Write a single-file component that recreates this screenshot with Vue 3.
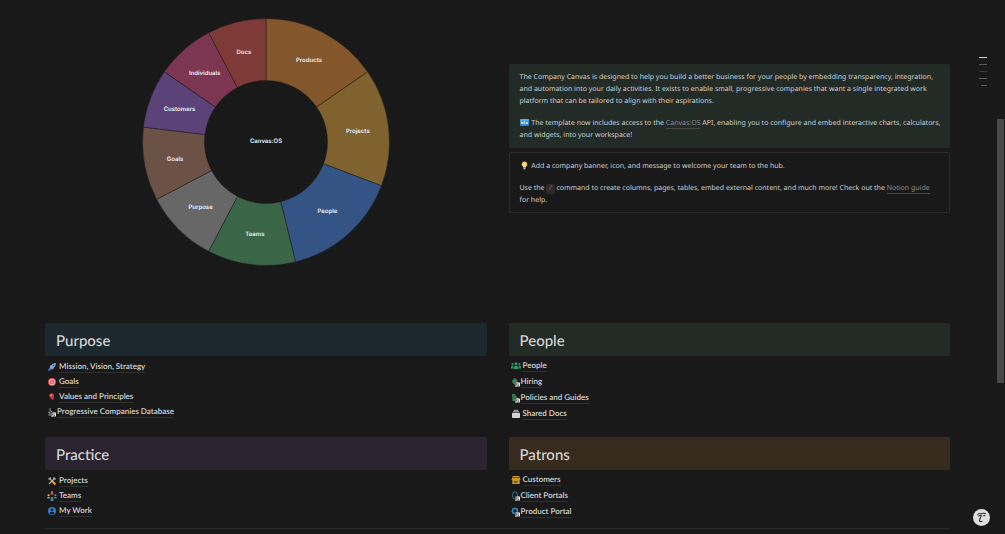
<script setup>
const parts = [
  { name: 'Products', share: 8, color: '#84562b' },
  { name: 'Projects', share: 8, color: '#7f622d' },
  { name: 'People', share: 8, color: '#335485' },
  { name: 'Teams', share: 6, color: '#3a6647' },
  { name: 'Purpose', share: 5, color: '#676767' },
  { name: 'Goals', share: 5, color: '#6c5146' },
  { name: 'Customers', share: 4, color: '#5b4379' },
  { name: 'Individuals', share: 4, color: '#7c3652' },
  { name: 'Docs', share: 4, color: '#7d3a36' },
]
const total = parts.reduce((sum, p) => sum + p.share, 0)
const point = (radius, turn) => {
  const a = turn * Math.PI * 2
  return [(124 + radius * Math.sin(a)).toFixed(2), (124 - radius * Math.cos(a)).toFixed(2)]
}
let start = 0
const slices = parts.map((p) => {
  const from = start / total
  start += p.share
  const to = start / total
  const d = `M${point(123.5, from)} A123.5 123.5 0 0 1 ${point(123.5, to)} L${point(61.5, to)} A61.5 61.5 0 0 0 ${point(61.5, from)} Z`
  const [x, y] = point(92.5, (from + to) / 2)
  return { ...p, d, x, y }
})

const columns = [
  {
    side: 'left',
    sections: [
      {
        title: 'Purpose', tone: 'blue',
        links: [
          { icon: 'rocket', text: 'Mission, Vision, Strategy' },
          { icon: 'target', text: 'Goals' },
          { icon: 'gem', text: 'Values and Principles' },
          { icon: 'chart', text: 'Progressive Companies Database', jump: true },
        ],
      },
      {
        title: 'Practice', tone: 'purple',
        links: [
          { icon: 'tools', text: 'Projects' },
          { icon: 'circle', text: 'Teams' },
          { icon: 'user', text: 'My Work' },
        ],
      },
    ],
  },
  {
    side: 'right',
    sections: [
      {
        title: 'People', tone: 'green',
        links: [
          { icon: 'group', text: 'People' },
          { icon: 'hand', text: 'Hiring', jump: true },
          { icon: 'doc', text: 'Policies and Guides', jump: true },
          { icon: 'archive', text: 'Shared Docs' },
        ],
      },
      {
        title: 'Patrons', tone: 'brown',
        links: [
          { icon: 'shop', text: 'Customers' },
          { icon: 'ring', text: 'Client Portals', jump: true },
          { icon: 'cog', text: 'Product Portal', jump: true },
        ],
      },
    ],
  },
]
</script>

<template>
  <div class="page">
    <main class="content">
      <div class="intro">
        <svg class="wheel" viewBox="0 0 248 248" role="img" aria-label="Canvas:OS">
          <path v-for="s in slices" :key="s.name" :d="s.d" :fill="s.color" stroke="#1c1b1b" stroke-opacity=".5" stroke-width="1" />
          <text v-for="s in slices" :key="s.name + 't'" :x="s.x" :y="s.y" dy="2">{{ s.name }}</text>
          <text x="124" y="125">Canvas:OS</text>
        </svg>
        <div class="notes">
          <section class="note filled">
            <p>The Company Canvas is designed to help you build a better business for your people by embedding transparency, integration, and automation into your daily activities. It exists to enable small, progressive companies that want a single integrated work platform that can be tailored to align with their aspirations.</p>
            <p>
              <svg class="emoji" viewBox="0 0 9 9"><rect y="1" width="9" height="7" rx="1" fill="#2e86cf" /><path d="M0 3V2a1 1 0 0 1 1-1h7a1 1 0 0 1 1 1v1z" fill="#5ba9e2" /><path d="M1.3 5.8V3.7l1.3 2.1V3.7M5 3.7H3.8v2.1H5M3.8 4.7h1M5.8 3.7l.4 2.1.6-1.5.6 1.5.4-2.1" fill="none" stroke="#fff" stroke-width=".6" /></svg>
              The template now includes access to the <a href="#api">Canvas:OS</a> API, enabling you to configure and embed interactive charts, calculators, and widgets, into your workspace!
            </p>
          </section>
          <section class="note outlined">
            <p>
              <svg class="emoji" viewBox="0 0 9 9"><path d="M4.5.5a2.8 2.8 0 0 0-1.6 5.1l.4.9h2.4l.4-.9A2.8 2.8 0 0 0 4.5.5z" fill="#f8cf63" /><path d="M3.7 2.5 4.5 5.5 5.3 2.5" fill="none" stroke="#fff0b4" stroke-width=".5" /><path d="M3.3 6.5h2.4v1.2L5 8.5H4l-.7-.8z" fill="#9bb2bd" /></svg>
              Add a company banner, icon, and message to welcome your team to the hub.
            </p>
            <p>Use the <code>/</code> command to create columns, pages, tables, embed external content, and much more! Check out the <a href="#guide">Notion guide</a> for&nbsp;help.</p>
          </section>
        </div>
      </div>

      <div class="directory">
        <div v-for="c in columns" :key="c.side" :class="['column', c.side]">
          <section v-for="s in c.sections" :key="s.title" class="group">
            <h2 :class="s.tone">{{ s.title }}</h2>
            <ul>
              <li v-for="l in s.links" :key="l.text" :class="{ jump: l.jump }">
                <svg class="icon" viewBox="0 0 10 10" aria-hidden="true">
                  <template v-if="l.icon === 'rocket'">
                    <path d="M2 4.5 4 3l3 3-1.5 2L5 6.5 3.5 5z" fill="#d64b45" />
                    <path d="M2.5 6.5C3 3.5 6 1 9 1c0 3-2.5 5.8-5.5 6.5z" fill="#75aee5" />
                    <path d="M7 1.5Q8 1 9 1q0 1-.5 2z" fill="#e25555" />
                    <circle cx="6.5" cy="3.5" r=".8" fill="#275b92" />
                    <path d="M1 9l.7-2.2L3.3 6l.8.8-.8 1.5z" fill="#3f7dc5" />
                  </template>
                  <template v-else-if="l.icon === 'target'">
                    <circle cx="5" cy="5" r="4" fill="#d8434a" /><circle cx="5" cy="5" r="2.9" fill="#f3cdca" />
                    <circle cx="5" cy="5" r="2" fill="#d8434a" /><circle cx="5" cy="5" r=".8" fill="#fff" />
                    <path d="M5 5l3-3" stroke="#5ca6d8" stroke-width=".8" />
                  </template>
                  <template v-else-if="l.icon === 'gem'">
                    <path d="M3 2 5.5 1.5 7 2.5v4L6 8 4 7 2.5 4.5z" fill="#c92e40" /><path d="M3 2 5.5 1.5 5 4.5 2.5 4z" fill="#ec6972" />
                  </template>
                  <template v-else-if="l.icon === 'chart'">
                    <path d="M3 1v7M1 5l2 1M1 8h4M3 3l2 2" fill="none" stroke="#8b8b8b" stroke-width="1" />
                  </template>
                  <template v-else-if="l.icon === 'tools'">
                    <path d="M2 2l6 6" stroke="#e49532" stroke-width="1.4" /><path d="M8 2 2 8" stroke="#9eb3bd" stroke-width="1.3" />
                    <path d="M1 3l2.5-2 1 1L2.5 4z" fill="#91a7b2" /><path d="M7 1v2h2" fill="none" stroke="#9eb3bd" /><path d="M5.5 5.5 8.5 8.5" stroke="#f2a036" stroke-width="1.8" />
                  </template>
                  <template v-else-if="l.icon === 'circle'">
                    <g fill="#e4645c"><circle cx="5" cy="1" r="1" /><path d="M3.3 3.5a1.7 1.7 0 0 1 3.4 0z" /></g>
                    <g fill="#edbf70"><circle cx="1.5" cy="4.3" r="1" /><path d="M0 7.3a1.7 1.7 0 0 1 3.3 0z" /></g>
                    <g fill="#42b88b"><circle cx="8.5" cy="4.3" r="1" /><path d="M6.7 7.3a1.7 1.7 0 0 1 3.3 0z" /></g>
                    <g fill="#3daee0"><circle cx="5" cy="7" r="1" /><path d="M3.3 9.7a1.7 1.7 0 0 1 3.4 0z" /></g>
                  </template>
                  <template v-else-if="l.icon === 'user'">
                    <circle cx="5" cy="5" r="4" fill="#2f7fd4" /><circle cx="5" cy="3.8" r="1.3" fill="#191919" /><path d="M2.5 7.2a2.9 2.9 0 0 1 5 0 3.6 3.6 0 0 1-5 0z" fill="#191919" />
                  </template>
                  <template v-else-if="l.icon === 'group'">
                    <g fill="#2c9b67"><circle cx="5" cy="2.7" r="1.5" /><circle cx="1.6" cy="3" r="1.1" /><circle cx="8.4" cy="3" r="1.1" /><path d="M2.5 8V6.5a2.5 1.7 0 0 1 5 0V8zM0 7.5V6a1.7 1.4 0 0 1 2.3-1.2Q1.8 5.5 1.8 7.5zM10 7.5V6a1.7 1.4 0 0 0-2.3-1.2q.5.7.5 2.7z" /></g>
                  </template>
                  <template v-else-if="l.icon === 'hand'">
                    <path d="M1 4l1-1.5L4 1l2.5 2v4L4 8 1.5 6z" fill="#3c7a57" />
                  </template>
                  <template v-else-if="l.icon === 'doc'">
                    <path d="M1 1h3l1 2 2 2v3H1.5z" fill="#377f58" /><path d="M2 3h2M2 5h3" stroke="#234f38" stroke-width=".6" />
                  </template>
                  <template v-else-if="l.icon === 'archive'">
                    <path d="M1 4.5q0-.8.8-.8h6.4q.8 0 .8.8v3.700q0 .8-.8.8H1.8Q1 9 1 8.200z" fill="#d3d3d3" /><path d="M2 2.700h6M2.800 1.300h4.400" stroke="#bdbdbd" stroke-width=".9" />
                  </template>
                  <template v-else-if="l.icon === 'shop'">
                    <path d="M1.5 1h7v1h-7zM1.2 2.4h7.6L9.5 5h-9zM1.3 5h7.4v4H1.3z" fill="#cc9326" /><path d="M3 6v1.5h3.5V6" fill="#654813" />
                  </template>
                  <template v-else-if="l.icon === 'ring'">
                    <ellipse cx="4" cy="4.5" rx="2.5" ry="3.8" fill="none" stroke="#33758c" stroke-width="1" />
                  </template>
                  <template v-else>
                    <circle cx="4" cy="4" r="2.5" fill="none" stroke="#3284b8" stroke-width="1.5" /><path d="M4 .5v1M.5 4h1M1.5 1.5l1 1M1.5 6.5l1-1M6.5 1.5l-1 1" stroke="#3284b8" />
                  </template>
                  <g v-if="l.jump"><rect x="4" y="5.5" width="5" height="4.5" fill="#777" /><path d="M5 9.5 8 6.5M5.5 6H8.5V9" fill="none" stroke="#e8e8e8" stroke-width="1" /></g>
                </svg>
                <a href="#page">{{ l.text }}</a>
              </li>
            </ul>
          </section>
        </div>
      </div>
      <hr />
    </main>

    <nav class="outline" aria-label="Outline"><i class="on"></i><i></i><i class="dim"></i><i></i><i class="short"></i></nav>
    <div class="track"><div class="thumb"></div></div>
    <button class="help" aria-label="Assistant">
      <svg viewBox="0 0 17 17"><path d="M4.5 5.5Q6 3.5 8 5Q9.5 3.5 12.5 4.5M5.500 7q1.500-1 3-.6L7 9.500M7 9.500 6.500 12.500h2.500M10.500 6.700l1.500-.2" fill="none" stroke="#222" stroke-width="1" stroke-linecap="round" stroke-linejoin="round" /></svg>
    </button>
  </div>
</template>

<style scoped>
.page {
  position: relative;
  min-height: 100vh;
  box-sizing: border-box;
  padding: 18px 55px 0 45px;
  background: #191919;
  color: #cfcfcf;
  font: 8px/12px Lato, "Liberation Sans", sans-serif;
  text-rendering: geometricPrecision;
}
.intro, .directory {
  display: grid;
  grid-template-columns: 1fr 1fr;
  column-gap: 22px;
}
.wheel { width: 248px; justify-self: center; }
.wheel text {
  fill: #f0f0f0;
  font: 600 6px Inter, sans-serif;
  text-anchor: middle;
}
.notes { padding-top: 46px; display: flex; flex-direction: column; gap: 4px; }
.note {
  padding: 8px 4px 6px 11px;
  border-radius: 2px;
  font-family: "Noto Sans", sans-serif;
  font-size: 7px;
}
.note p { margin: 0 0 10px; }
.note p:last-child { margin-bottom: 0; }
.filled { background: #232b27; }
.outlined { border: 1px solid #2b2b2b; padding: 8px 4px 5px 10px; }
.note a { color: #8c8c8c; text-decoration: none; border-bottom: 1px solid #474747; }
.emoji { width: 9px; height: 9px; margin-right: 1px; vertical-align: -2px; }
code {
  padding: 1px 2px;
  border-radius: 2px;
  background: #2b2b2b;
  color: #d9534c;
  font: 7px/8px "Liberation Mono", monospace;
}
.directory { margin-top: 57px; }
.group + .group { margin-top: 18px; }
.right .group + .group { margin-top: 15px; }
h2 {
  margin: 0;
  padding: 8px 11px 4px;
  border-radius: 2px;
  font-size: 15px;
  line-height: 21px;
  font-weight: 500;
  color: #d6d6d6;
}
.blue { background: #1d282e; }
.purple { background: #2b2430; }
.green { background: #232b27; }
.brown { background: #372b1e; }
ul { margin: 0; padding: 3px 0 0; list-style: none; }
.right ul { padding-top: 2px; }
li { display: flex; align-items: center; gap: 2px; height: 15px; padding-left: 2px; }
.right li { height: 16px; }
li.jump { gap: 0; }
.icon { width: 10px; height: 10px; }
li a {
  color: #d6d6d6;
  font-weight: 600;
  line-height: 11px;
  text-decoration: none;
  border-bottom: 1px solid #2f2f2f;
}
hr { margin: 8px 0 0; border: 0; border-top: 1px solid #2c2c2c; }
.outline {
  position: absolute;
  top: 57px;
  right: 18px;
  display: flex;
  flex-direction: column;
  align-items: flex-end;
  gap: 6px;
}
.outline i { width: 8px; height: 1px; background: #5a5a5a; }
.outline .on { background: #d0d0d0; }
.outline .dim { background: #3b3b3b; }
.outline .short { width: 6px; }
.track { position: absolute; inset: 0 1px 0 auto; width: 7px; }
.thumb { height: 264px; margin-top: 119px; background: #484848; }
.help {
  position: absolute;
  right: 15px;
  bottom: 8px;
  width: 17px;
  height: 17px;
  padding: 0;
  border: 0;
  border-radius: 50%;
  background: #dedede;
}
.help svg { display: block; width: 17px; height: 17px; }
</style>

<style>
body { margin: 0; background: #191919; }
</style>
